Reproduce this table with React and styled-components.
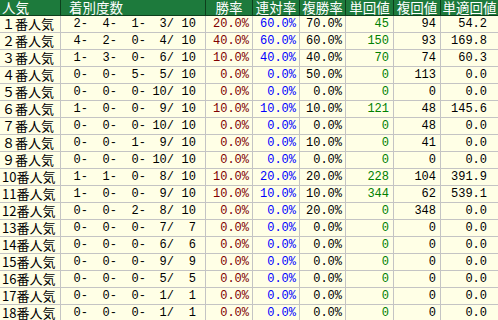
import React from 'react';
import styled, { createGlobalStyle } from 'styled-components';

const GlobalStyle = createGlobalStyle`
  html, body {
    margin: 0;
    padding: 0;
    background: #ffffe6;
    overflow: hidden;
  }
`;

const rows = [
  ['１番人気', ['2-', '4-', '1-', '3/', '10'], '20.0%', '60.0%', '70.0%', '45', '94', '54.2'],
  ['２番人気', ['4-', '2-', '0-', '4/', '10'], '40.0%', '60.0%', '60.0%', '150', '93', '169.8'],
  ['３番人気', ['1-', '3-', '0-', '6/', '10'], '10.0%', '40.0%', '40.0%', '70', '74', '60.3'],
  ['４番人気', ['0-', '0-', '5-', '5/', '10'], '0.0%', '0.0%', '50.0%', '0', '113', '0.0'],
  ['５番人気', ['0-', '0-', '0-', '10/', '10'], '0.0%', '0.0%', '0.0%', '0', '0', '0.0'],
  ['６番人気', ['1-', '0-', '0-', '9/', '10'], '10.0%', '10.0%', '10.0%', '121', '48', '145.6'],
  ['７番人気', ['0-', '0-', '0-', '10/', '10'], '0.0%', '0.0%', '0.0%', '0', '48', '0.0'],
  ['８番人気', ['0-', '0-', '1-', '9/', '10'], '0.0%', '0.0%', '10.0%', '0', '41', '0.0'],
  ['９番人気', ['0-', '0-', '0-', '10/', '10'], '0.0%', '0.0%', '0.0%', '0', '0', '0.0'],
  ['10番人気', ['1-', '1-', '0-', '8/', '10'], '10.0%', '20.0%', '20.0%', '228', '104', '391.9'],
  ['11番人気', ['1-', '0-', '0-', '9/', '10'], '10.0%', '10.0%', '10.0%', '344', '62', '539.1'],
  ['12番人気', ['0-', '0-', '2-', '8/', '10'], '0.0%', '0.0%', '20.0%', '0', '348', '0.0'],
  ['13番人気', ['0-', '0-', '0-', '7/', '7'], '0.0%', '0.0%', '0.0%', '0', '0', '0.0'],
  ['14番人気', ['0-', '0-', '0-', '6/', '6'], '0.0%', '0.0%', '0.0%', '0', '0', '0.0'],
  ['15番人気', ['0-', '0-', '0-', '9/', '9'], '0.0%', '0.0%', '0.0%', '0', '0', '0.0'],
  ['16番人気', ['0-', '0-', '0-', '5/', '5'], '0.0%', '0.0%', '0.0%', '0', '0', '0.0'],
  ['17番人気', ['0-', '0-', '0-', '1/', '1'], '0.0%', '0.0%', '0.0%', '0', '0', '0.0'],
  ['18番人気', ['0-', '0-', '0-', '1/', '1'], '0.0%', '0.0%', '0.0%', '0', '0', '0.0'],
];

const cols = '61px 145px 47px 47px 46px 48px 47px 57px';

const Table = styled.div`
  width: 498px;
  font-family: "Liberation Mono", "Noto Sans CJK JP", monospace;
`;

const HeadRow = styled.div`
  display: grid;
  grid-template-columns: ${cols};
  height: 16px;
  background: #1d7a3c;
  border-bottom: 1px solid #0d3f1c;
  box-sizing: border-box;
`;

const HeadCell = styled.div`
  box-sizing: border-box;
  border-right: ${p => (p.$last ? 'none' : '1px solid #0d3f1c')};
  color: #ffffff;
  font-family: "Noto Sans CJK JP", sans-serif;
  font-size: 13.5px;
  line-height: 15px;
  white-space: nowrap;
  text-align: ${p => p.$align || 'center'};
  padding-left: ${p => p.$pad || 0}px;
`;

const Row = styled.div`
  display: grid;
  grid-template-columns: ${cols};
  height: 17px;
  border-bottom: 1px solid #c4c4c4;
  box-sizing: border-box;
`;

const Cell = styled.div`
  box-sizing: border-box;
  border-right: ${p => (p.$last ? 'none' : '1px solid #c4c4c4')};
  font-size: 12px;
  line-height: 16px;
  white-space: nowrap;
  text-align: right;
  padding-right: ${p => p.$pad || 3}px;
  color: ${p => p.$color || '#000000'};
`;

const Label = styled(Cell)`
  font-family: "Noto Sans CJK JP", sans-serif;
  font-size: 13px;
  text-align: left;
  padding-left: 2px;
`;

const Counts = styled(Cell)`
  display: grid;
  grid-template-columns: 27px 29px 29px 28px 22px;
  padding-right: 0;
`;

const Count = styled.span`
  text-align: right;
`;

export default function App() {
  return (
    <>
      <GlobalStyle />
      <Table>
        <HeadRow>
          <HeadCell $align="left" $pad={2}>人気</HeadCell>
          <HeadCell $align="left" $pad={8}>着別度数</HeadCell>
          <HeadCell>勝率</HeadCell>
          <HeadCell>連対率</HeadCell>
          <HeadCell>複勝率</HeadCell>
          <HeadCell>単回値</HeadCell>
          <HeadCell>複回値</HeadCell>
          <HeadCell $last>単適回値</HeadCell>
        </HeadRow>
        {rows.map(r => (
          <Row key={r[0]}>
            <Label>{r[0]}</Label>
            <Counts>
              {r[1].map((c, i) => (
                <Count key={i}>{c}</Count>
              ))}
            </Counts>
            <Cell $color="#800000">{r[2]}</Cell>
            <Cell $color="#0000ff">{r[3]}</Cell>
            <Cell>{r[4]}</Cell>
            <Cell $color="#008000" $pad={4}>{r[5]}</Cell>
            <Cell $pad={4}>{r[6]}</Cell>
            <Cell $last $pad={11}>{r[7]}</Cell>
          </Row>
        ))}
      </Table>
    </>
  );
}
